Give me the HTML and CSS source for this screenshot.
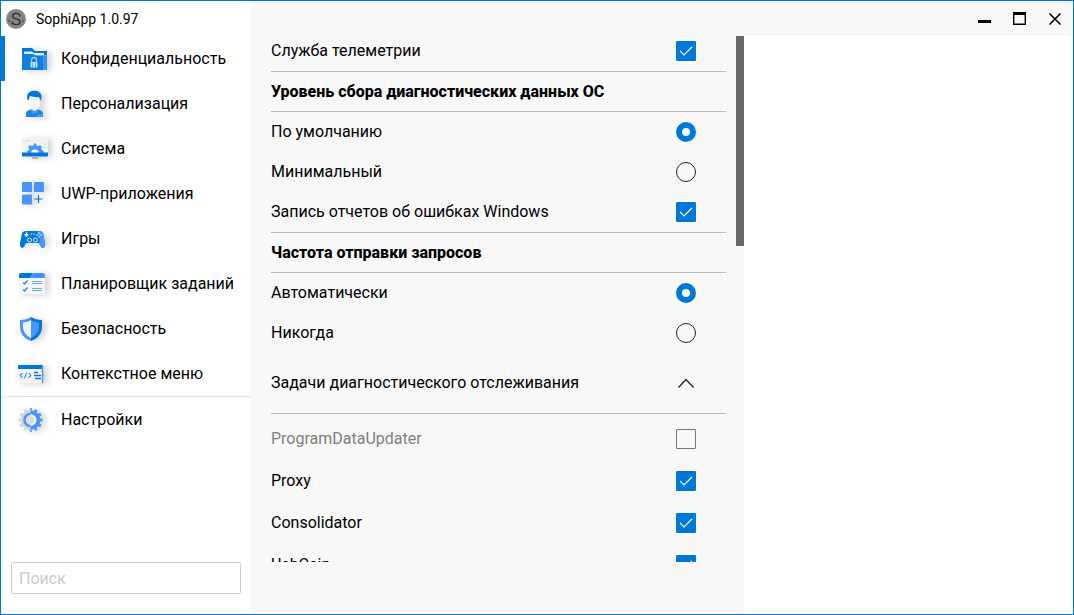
FILE: index.html
```html
<!DOCTYPE html>
<html lang="ru">
<head>
<meta charset="utf-8">
<title>SophiApp 1.0.97</title>
<link rel="stylesheet" href="styles.css">
</head>
<body>
<div class="window">
  <aside class="sidebar">
    <div class="brand">
      <svg class="logo" viewBox="0 0 20 20" aria-hidden="true">
        <circle cx="10" cy="10" r="10" fill="#858585"/>
        <circle cx="10" cy="10" r="7" fill="none" stroke="#7b7b7b" stroke-width="1"/>
        <text class="logo-letter" x="10" y="16" text-anchor="middle">S</text>
        <circle cx="3" cy="12" r="1" fill="#555"/><circle cx="6.500" cy="14.500" r="1" fill="#333"/><circle cx="17" cy="12" r="1" fill="#555"/>
      </svg>
      <span>SophiApp 1.0.97</span>
    </div>
    <nav class="nav">
      <a class="nav-item active" href="#privacy">
        <svg class="icon" viewBox="0 0 32 33" aria-hidden="true">
          <path d="M5 6h10l3 3h12v4H5z" fill="#0078d7"/>
          <path d="M7 13V9.500h8l2 1.500h10V13z" fill="#dfeaf8"/>
          <path d="M5 12h11l3 1.500h11V28H5z" fill="#0f80dc"/>
          <path d="M26 13.500h4V28h-4z" fill="#3f90fb"/>
          <path d="M14.500 20v-2a2.500 2.500 0 0 1 5 0v2" fill="none" stroke="#9fcdf5" stroke-width="1.300"/>
          <rect x="13.500" y="20" width="7" height="5.500" rx="1" fill="#c6e1fb"/>
          <path d="M15.500 21v4M18.500 21v4" stroke="#5ba9ea"/>
        </svg>
        <span>Конфиденциальность</span>
      </a>
      <a class="nav-item" href="#personalization">
        <svg class="icon" viewBox="0 0 32 33" aria-hidden="true">
          <path d="M14 19h7v5h-7z" fill="#d9dde3"/>
          <path d="M9 30v-3c0-3 2-3.500 5-4.500l3.500 2 3.500-2c3 1 5 1.500 5 4.500v3z" fill="#1684e4"/>
          <path d="M13.500 22.500l4 2 4-2-1.500 4h-5z" fill="#4895ff"/>
          <path d="M22 27h4v3h-7z" fill="#4895ff"/>
          <path d="M11.500 10h12v6c0 4-3.500 6.500-6 6.500s-6-2.500-6-6.500z" fill="#f4f4f4"/>
          <path d="M11 14c-2-5-.5-9 4-10 5-1 9 1 9.500 5 .3 2-.5 3.500-1 5l-1.500-4c-3 .5-6 0-9-1z" fill="#0078d7"/>
        </svg>
        <span>Персонализация</span>
      </a>
      <a class="nav-item" href="#system">
        <svg class="icon" viewBox="0 0 32 33" aria-hidden="true">
          <rect x="5" y="6" width="26" height="16" rx="1" fill="#f2f2f2"/>
          <path d="M7 9.500h1.500M9.500 8.500H13M28 11v2M28 15v1" stroke="#d4d7da"/>
          <path d="M11 21.500l-1-2 2-1.500v-2l-1-1 2-2 1.500 1 2-.5.5-2h2l.5 2 2 .5 1.500-1 2 2-1 1.500 1 1.500 2 1.500-.5 2z" fill="#4895ff"/>
          <path d="M14 21.500a4 4 0 0 1 8 0z" fill="#f5f5f5"/>
          <path d="M5 20.500h26V23.500q0 1-1 1H6q-1 0-1-1z" fill="#0078d7"/>
          <path d="M15 24.500h6V27h-6z" fill="#b8b0ae"/>
        </svg>
        <span>Система</span>
      </a>
      <a class="nav-item" href="#uwp">
        <svg class="icon" viewBox="0 0 32 33" aria-hidden="true">
          <g fill="#4895ff"><rect x="5" y="5" width="10" height="10" rx="1"/><rect x="17" y="5" width="10" height="10" rx="1"/><rect x="5" y="17.500" width="10" height="10" rx="1"/></g>
          <path d="M21.500 18v8M17.500 22h8" stroke="#0078d7" stroke-width="1.200"/>
        </svg>
        <span>UWP-приложения</span>
      </a>
      <a class="nav-item" href="#games">
        <svg class="icon" viewBox="0 0 32 33" aria-hidden="true">
          <path d="M5 11q1-2 4-2h13q3 0 4 2l2 10q.5 4-2 5-2 0-4-5H9q-2 5-4 5-2.500-1-2-5z" fill="#0078d7"/>
          <path d="M21 9q4 0 5 2l2 10q.5 4-2 5-2 0-4-5l1-4-3-4z" fill="#4895ff"/>
          <path d="M9.500 10.500v4.500M7.500 12.800h4" stroke="#fff" stroke-width="1.500"/>
          <g fill="#0078d7" stroke="#d7ebff" stroke-width="1"><circle cx="12.500" cy="18" r="2"/><circle cx="18.500" cy="18" r="2"/></g>
          <g fill="#dcecff"><circle cx="14.500" cy="12" r=".7"/><circle cx="17" cy="12" r=".7"/><circle cx="20" cy="13" r=".8"/><circle cx="22" cy="11" r=".8"/><circle cx="24" cy="13" r=".8"/><circle cx="22" cy="15" r=".8"/></g>
        </svg>
        <span>Игры</span>
      </a>
      <a class="nav-item" href="#tasks">
        <svg class="icon" viewBox="0 0 32 33" aria-hidden="true">
          <rect x="2" y="6" width="26" height="21" rx="2" fill="#f4f6f8"/>
          <path d="M2 11V8q0-2 2-2h12l-3 5z" fill="#0078d7"/>
          <path d="M13 11q1-4 4-5h9q2 0 2 2v3z" fill="#4895ff"/>
          <path d="M17 8.500h8" stroke="#2d81e7"/>
          <path d="M6 15.500l1.500 1.500 3-3.500M6 22.500l1.500 1.500 3-3.500" fill="none" stroke="#208be0" stroke-width="1.300"/>
          <path d="M15 14.500h10M15 16.500h10M15 21.500h10M15 23.500h10" stroke="#69a9ff"/>
        </svg>
        <span>Планировщик заданий</span>
      </a>
      <a class="nav-item" href="#security">
        <svg class="icon" viewBox="0 0 32 33" aria-hidden="true">
          <path d="M14 5c-3 2-7 3-11 3v7c0 7 5 12 11 14z" fill="#4895ff"/>
          <path d="M14 5c3 2 7 3 11 3v7c0 7-5 12-11 14z" fill="#0078d7"/>
          <path d="M14 8c-2 1.500-5 2-8 2.500V15c0 5 4 9 8 11z" fill="#f2f2f2"/>
          <path d="M14 8c2 1.500 5 2 8 2.500V15c0 5-4 9-8 11z" fill="#4895ff"/>
        </svg>
        <span>Безопасность</span>
      </a>
      <a class="nav-item" href="#context-menu">
        <svg class="icon" viewBox="0 0 32 33" aria-hidden="true">
          <rect x="1" y="8" width="25" height="18" rx="1" fill="#f6f6f6"/>
          <path d="M1 12V9q0-1 1-1h23q1 0 1 1v3z" fill="#0078d7"/>
          <path d="M25 9h1v17h-1z" fill="#4895ff" stroke="#4895ff" stroke-width=".5"/>
          <path d="M5.500 16L3 18.500 5.500 21M11.500 16l2.500 2.500-2.500 2.500M9.500 15.500l-2 6" fill="none" stroke="#3098e0" stroke-width="1.100"/>
          <path d="M17 15.500h4M17 18.500h7M18 21.500h6" stroke="#0078d7" stroke-width="1.300"/>
        </svg>
        <span>Контекстное меню</span>
      </a>
      <a class="nav-item settings" href="#settings">
        <svg class="icon" viewBox="0 0 32 33" aria-hidden="true">
          <defs>
            <clipPath id="left-half"><path d="M0 0h13.500v33H0z"/></clipPath>
            <clipPath id="right-half"><path d="M13.500 0H32v33H13.500z"/></clipPath>
            <g id="cog" fill="none"><circle cx="13.500" cy="17" r="8" stroke-width="4"/><circle cx="13.500" cy="17" r="10.800" stroke-width="2.400" pathLength="24" stroke-dasharray="1 1" stroke-dashoffset=".5"/></g>
          </defs>
          <circle cx="13.500" cy="17" r="7" fill="#f7f7f7"/>
          <use href="#cog" stroke="#d2d4d7" clip-path="url(#left-half)"/>
          <use href="#cog" stroke="#4895ff" clip-path="url(#right-half)"/>
          <path d="M13.500 11a6 6 0 0 0 0 12" fill="none" stroke="#4895ff" stroke-width="2.500"/>
          <circle cx="13.500" cy="17" r="4" fill="#dcdee0"/>
        </svg>
        <span>Настройки</span>
      </a>
    </nav>
    <input class="search" type="search" placeholder="Поиск" aria-label="Поиск">
  </aside>

  <header class="titlebar">
    <button class="caption" type="button" aria-label="Свернуть"><svg viewBox="0 0 14 14"><path d="M0 9.500h13" stroke="#000" stroke-width="3"/></svg></button>
    <button class="caption" type="button" aria-label="Развернуть"><svg viewBox="0 0 14 14"><path d="M.7 1v11.300h11.600V1" fill="none" stroke="#000" stroke-width="1.400"/><path d="M0 1.500h13" stroke="#000" stroke-width="3"/></svg></button>
    <button class="caption" type="button" aria-label="Закрыть"><svg viewBox="0 0 14 14"><path d="M1.500 1.500l11 11M12.500 1.500l-11 11" stroke="#000" stroke-width="1.600"/></svg></button>
  </header>

  <main class="panel">
    <div class="options">
      <label class="row first"><span>Служба телеметрии</span><span class="control"><input class="check" type="checkbox" checked><svg class="tick" viewBox="0 0 20 20"><path d="M4 10l4 4 8-8"/></svg></span></label>
      <h2 class="heading">Уровень сбора диагностических данных ОС</h2>
      <label class="row"><span>По умолчанию</span><input class="radio" type="radio" name="level" checked></label>
      <label class="row"><span>Минимальный</span><input class="radio" type="radio" name="level"></label>
      <label class="row"><span>Запись отчетов об ошибках Windows</span><span class="control"><input class="check" type="checkbox" checked><svg class="tick" viewBox="0 0 20 20"><path d="M4 10l4 4 8-8"/></svg></span></label>
      <h2 class="heading">Частота отправки запросов</h2>
      <label class="row"><span>Автоматически</span><input class="radio" type="radio" name="frequency" checked></label>
      <label class="row"><span>Никогда</span><input class="radio" type="radio" name="frequency"></label>
      <button class="row expander" type="button" aria-expanded="true"><span>Задачи диагностического отслеживания</span><svg class="chevron" viewBox="0 0 20 20"><path d="M2.500 14.500L10 6.500l7.500 8"/></svg></button>
      <div class="tasks">
        <label class="row task disabled"><span>ProgramDataUpdater</span><input class="check" type="checkbox" disabled></label>
        <label class="row task"><span>Proxy</span><span class="control"><input class="check" type="checkbox" checked><svg class="tick" viewBox="0 0 20 20"><path d="M4 10l4 4 8-8"/></svg></span></label>
        <label class="row task"><span>Consolidator</span><span class="control"><input class="check" type="checkbox" checked><svg class="tick" viewBox="0 0 20 20"><path d="M4 10l4 4 8-8"/></svg></span></label>
        <label class="row task"><span>UsbCeip</span><span class="control"><input class="check" type="checkbox" checked><svg class="tick" viewBox="0 0 20 20"><path d="M4 10l4 4 8-8"/></svg></span></label>
      </div>
    </div>
    <div class="scrollbar"><div class="thumb"></div></div>
  </main>
</div>
</body>
</html>
```
FILE: styles.css
```css
* { box-sizing: border-box; }

body {
  margin: 0;
  font: 16px/20px Roboto, sans-serif;
  color: #000;
}

.window {
  display: grid;
  grid-template: 35px minmax(0, 1fr) / 250px 3fr 2fr;
  height: 100vh;
  border: 1px solid #0078d7;
  background: #fff;
}

.sidebar {
  grid-row: 1 / 3;
  display: flex;
  flex-direction: column;
}

.brand {
  display: flex;
  align-items: center;
  gap: 10px;
  height: 35px;
  padding-left: 5px;
  font-size: 14px;
  line-height: 18px;
}

.logo { width: 20px; height: 20px; }
.logo-letter { font: 300 17px Roboto, sans-serif; fill: #111; }

.nav-item {
  display: flex;
  align-items: center;
  gap: 12px;
  height: 45px;
  padding-left: 16px;
  color: inherit;
  text-decoration: none;
}

.nav-item.active {
  margin-left: -1px;
  padding-left: 12px;
  border-left: 5px solid #0078d7;
}

.nav-item.settings {
  height: 46px;
  border-top: 1px solid #e3e3e3;
}

.icon {
  width: 32px;
  height: 33px;
  overflow: visible;
  filter: drop-shadow(4px 1px 3px rgba(0, 0, 0, 0.17));
}

.search {
  height: 32px;
  margin: auto 10px 20px;
  padding: 0 7px;
  border: 1px solid #ccc;
  border-radius: 2px;
  background: #fff;
  font: inherit;
  appearance: none;
}

.search::placeholder { color: #ccc; opacity: 1; }

.titlebar {
  grid-column: 2 / 4;
  display: flex;
  justify-content: flex-end;
  background: #f8f8f8;
}

.caption {
  display: grid;
  place-items: center;
  width: 35px;
  padding: 0;
  border: 0;
  background: none;
}

.caption svg { width: 14px; height: 14px; }

.panel {
  display: flex;
  padding-bottom: 52px;
  padding-left: 20px;
  background: #f8f8f8;
}

.options {
  flex: 1;
  margin-right: 10px;
  overflow: hidden;
}

.scrollbar { width: 8px; }
.thumb { height: 40%; background: #686868; }

.row {
  display: flex;
  align-items: center;
  justify-content: space-between;
  height: 40px;
  padding-right: 30px;
}

.row.first {
  height: 35px;
  padding-bottom: 5px;
}

.heading {
  margin: 0;
  padding: 10px 0 9px;
  border: solid #b9b9b9;
  border-width: 1px 0;
  font-size: 16px;
  font-weight: 800;
}

.control { display: grid; }
.control > * { grid-area: 1 / 1; }

.check,
.radio {
  width: 20px;
  height: 20px;
  margin: 0;
  border: 1px solid #222;
  appearance: none;
}

.check { border-radius: 1px; }
.check:disabled { border-color: #777; }
.check:checked { border-color: #0078d7; background: #0078d7; }

.radio { border-radius: 50%; }
.radio:checked { border: 6px solid #0078d7; background: #fff; }

.tick {
  width: 20px;
  height: 20px;
  fill: none;
  stroke: #fff;
  stroke-width: 1.1;
  pointer-events: none;
}

.expander {
  width: 100%;
  height: 60px;
  padding: 0 30px 0 0;
  border: 0;
  background: none;
  color: inherit;
  font: inherit;
  text-align: left;
}

.chevron {
  width: 20px;
  height: 20px;
  fill: none;
  stroke: #222;
  stroke-width: 1.3;
}

.tasks {
  padding-top: 4px;
  border-top: 1px solid #b9b9b9;
}

.task {
  height: 42px;
  line-height: 22px;
}

.disabled { color: #808080; }
```
